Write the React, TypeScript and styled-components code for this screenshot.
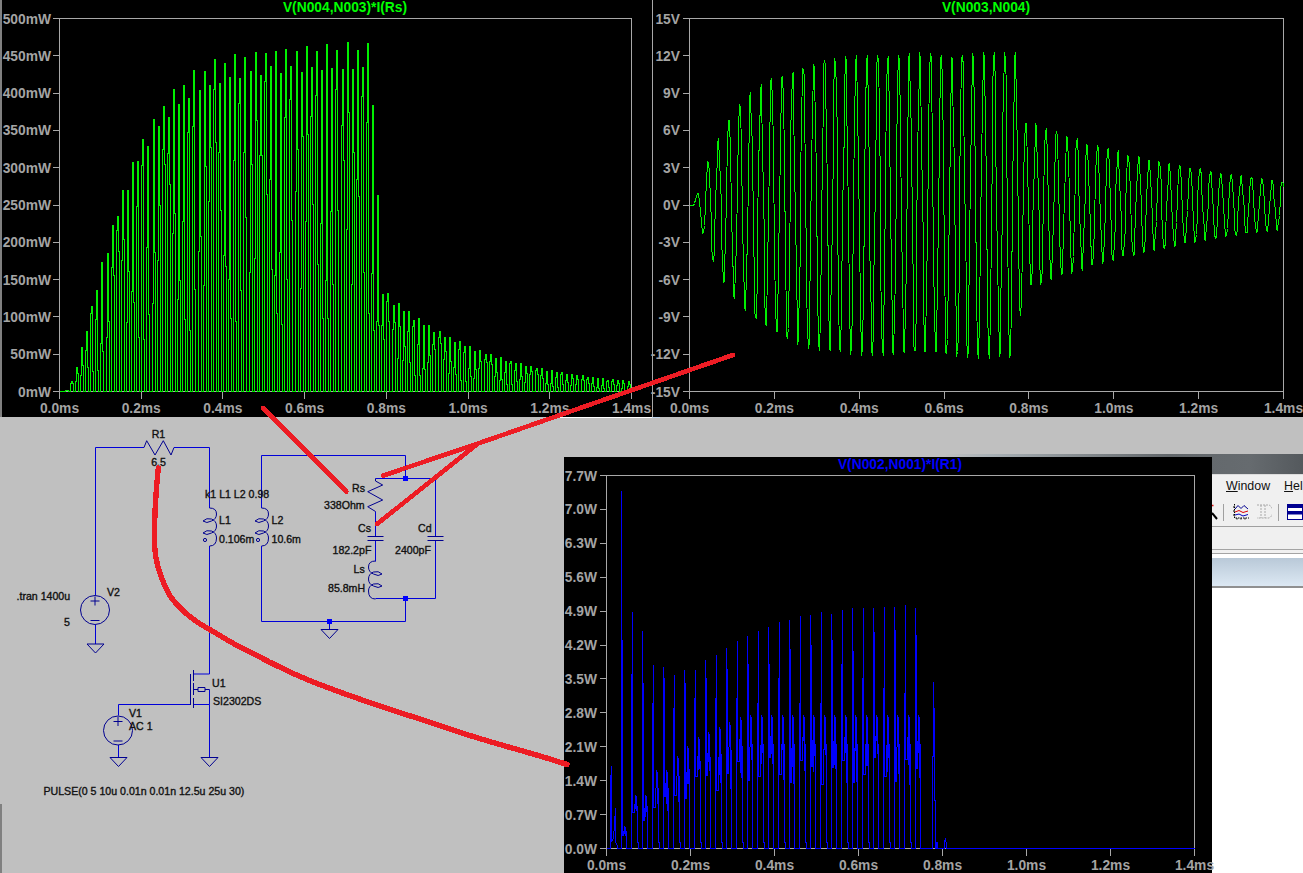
import React from 'react';
import styled, { createGlobalStyle, css } from 'styled-components';

const GlobalStyle = createGlobalStyle`
  html, body { margin: 0; padding: 0; background: #c0c0c0; }
  body { font-family: "Liberation Sans", Arial, sans-serif; overflow: hidden; }
`;

const Desktop = styled.div`
  position: relative;
  width: 1303px;
  height: 873px;
  overflow: hidden;
  background: #c0c0c0;
`;

/* plot windows */
const PlotWindow = styled.div<{ $left: number; $top: number; $w: number; $h: number; $edge?: number; $edgeColor?: string }>`
  position: absolute;
  left: ${p => p.$left}px;
  top: ${p => p.$top}px;
  width: ${p => p.$w}px;
  height: ${p => p.$h}px;
  background: #000;
  ${p => p.$edge && css`
    &::before {
      content: '';
      position: absolute;
      left: 0;
      top: 0;
      bottom: 0;
      width: ${p.$edge}px;
      background: ${p.$edgeColor};
    }
  `}
`;

const PlotTitle = styled.div<{ $color: string; $left: number; $width: number }>`
  height: 16px;
  margin-left: ${p => p.$left}px;
  width: ${p => p.$width}px;
  text-align: center;
  color: ${p => p.$color};
  font-weight: 700;
  font-size: 13.8px;
  line-height: 16px;
  white-space: nowrap;
`;

const ChartSvg = styled.svg`
  display: block;
  overflow: visible;
`;

const AxisLabel = styled.text`
  fill: #a4a4a4;
  font-family: "Liberation Sans", Arial, sans-serif;
  font-weight: 700;
  font-size: 13.8px;
`;

const AxisLine = styled.path`
  stroke: #a8a8a8;
  stroke-width: 1;
  fill: none;
  shape-rendering: crispEdges;
`;

const Trace = styled.polyline<{ $color: string }>`
  fill: none;
  stroke: ${p => p.$color};
  stroke-width: 1;
  stroke-linejoin: miter;
  shape-rendering: crispEdges;
`;

/* schematic */
const Canvas = styled.svg`
  position: absolute;
  left: 0;
  top: 0;
  pointer-events: none;
`;

const Wire = styled.path`
  stroke: #0000d8;
  stroke-width: 1;
  fill: none;
`;

const Part = styled.path`
  stroke: #000090;
  stroke-width: 1;
  fill: none;
`;

const Ring = styled.circle`
  stroke: #000090;
  stroke-width: 1;
  fill: none;
`;

const Junction = styled.rect`
  fill: #0000ff;
`;

const Label = styled.text`
  fill: #111;
  font-family: "Liberation Sans", Arial, sans-serif;
  font-size: 10.6px;
  font-weight: 400;
  stroke: #111;
  stroke-width: 0.35px;
  dominant-baseline: central;
`;

const Scribble = styled.path<{ $w: number }>`
  stroke: #ed1c24;
  stroke-width: ${p => p.$w};
  stroke-linejoin: round;
  stroke-linecap: round;
  fill: none;
  shape-rendering: crispEdges;
`;

const Sliver = styled.div<{ $left: number; $top: number; $w: number; $h: number; $color: string }>`
  position: absolute;
  left: ${p => p.$left}px;
  top: ${p => p.$top}px;
  width: ${p => p.$w}px;
  height: ${p => p.$h}px;
  background: ${p => p.$color};
`;

/* the editor window peeking out behind the third plot */
const AppWindow = styled.div`
  position: absolute;
  left: 946px;
  top: 454px;
  width: 357px;
  height: 419px;
  overflow: hidden;
  background: #fff;
  display: flex;
  flex-direction: column;
`;

const TitleBand = styled.div`
  height: 20px;
  flex: none;
  background: linear-gradient(90deg, #bfbfbf, #a9b1b6 12%, #848a8e 38%, #62676b 62%, #666b6f 85%, #54595d);
  border-bottom: 1px solid #dcdcdc;
`;

const MenuBar = styled.div`
  height: 28px;
  flex: none;
  box-sizing: border-box;
  display: flex;
  align-items: center;
  gap: 14px;
  padding: 0 0 6px 280px;
  background: #f0f0f0;
  font-size: 12.4px;
  color: #111;
  white-space: nowrap;
`;

const ToolBar = styled.div`
  height: 24px;
  flex: none;
  display: flex;
  align-items: flex-start;
  padding: 1px 0 0 266px;
  box-sizing: border-box;
  background: #f0f0f0;
  border-bottom: 1px solid #a0a0a0;
`;

const ToolSep = styled.div<{ $gap: number }>`
  width: 1px;
  height: 17px;
  margin-left: ${p => p.$gap}px;
  background: #a0a0a0;
`;

const ToolIcon = styled.svg<{ $gap: number }>`
  flex: none;
  margin-left: ${p => p.$gap}px;
  display: block;
`;

const ToolRow = styled.div`
  height: 22px;
  flex: none;
  background: #f0f0f0;
  border-bottom: 1px solid #a4a4a4;
`;

const TabStrip = styled.div`
  height: 3px;
  flex: none;
  margin-bottom: 4px;
  background: #f0f0f0;
  border-bottom: 1px solid #a4a4a4;
`;

const Gradient = styled.div`
  height: 28px;
  flex: none;
  background: linear-gradient(180deg, #b9c9d8, #dce8f3);
  border-bottom: 2px solid #909090;
`;

/* waveform data, times in us */
const steps = (end: number) => {
  const out: number[] = [];
  let t = 0;
  let i = 0;
  while (t < end) {
    out.push(t);
    t += 2.3 + 0.8 * Math.sin(i * 1.7);
    i++;
  }
  out.push(end);
  // keep every crest in the list so the envelope stays smooth
  for (let c = 43.2; c < 772; c += 12.5) out.push(c - 1.2, c + 1.2);
  for (let c = 780.3; c < end; c += 12.1) out.push(c - 1.2, c + 1.2);
  return out.sort((a, b) => a - b);
};

const voltsAt = (t: number) => {
  if (t < 10) return 0;
  if (t < 16) return 0.2 * (t - 10) / 6 * 3;
  if (t < 772) return 12.35 * (1 - Math.exp(-(t - 10) / 100)) * Math.cos(2 * Math.PI * (t - 43.2) / 25);
  const after = t < 785 ? 12.3 - (t - 772) * 0.42 : 7 * Math.exp(-(t - 785) / 480);
  return after * Math.cos(2 * Math.PI * (t - 768.2) / 24.2);
};

const powerEnvelope = (t: number) => {
  if (t < 12) return 0;
  if (t < 762) {
    const e = 1 - Math.exp(-(t - 10) / 100);
    return 470 * e * e;
  }
  return t < 790 ? 470 - (t - 762) * 11.8 : 140 * Math.exp(-(t - 790) / 260);
};

type Spec = {
  left: number; right: number; top: number; bottom: number;
  w: number; h: number;
  yLabels: string[];
  xLabels: string[];
  labelRight: number;
  points: string;
  color: string;
};

const MS_LABELS = ['0.0ms', '0.2ms', '0.4ms', '0.6ms', '0.8ms', '1.0ms', '1.2ms', '1.4ms'];

const Chart: React.FC<Spec> = ({ left, right, top, bottom, w, h, yLabels, xLabels, labelRight, points, color }) => {
  const yGap = (bottom - top) / (yLabels.length - 1);
  const xGap = (right - left) / (xLabels.length - 1);
  let ticks = `M${left - 7} ${top}H${right}V${bottom}H${left}V${top}`;
  yLabels.forEach((_, i) => { ticks += `M${left - 7} ${top + i * yGap}H${left}`; });
  xLabels.forEach((_, i) => { ticks += `M${left + i * xGap} ${bottom}V${bottom + 7}`; });
  return (
    <ChartSvg width={w} height={h}>
      <AxisLine d={ticks} />
      <Trace $color={color} points={points} />
      {yLabels.map((l, i) => (
        <AxisLabel key={l} x={labelRight} y={top + i * yGap + 5} textAnchor="end">{l}</AxisLabel>
      ))}
      {xLabels.map((l, i) => (
        <AxisLabel key={l} x={left + i * xGap} y={bottom + 21} textAnchor="middle">{l}</AxisLabel>
      ))}
    </ChartSvg>
  );
};

/* first plot: one spike per half period of the ringing */
const powerPoints = () => {
  const pts: Array<[number, number]> = [[59, 0]];
  for (let k = 1; 4 + 12.5 * k < 1400; k++) {
    const t = 4 + 12.5 * k;
    const p = powerEnvelope(t) * (k % 2 ? 0.94 : 1) * (1 - 0.025 * Math.abs(Math.sin(k * 2.3)));
    const x = Math.round(59 + t / 1400 * 572);
    const mid = 0.62 + 0.3 * Math.sin(k * 1.3);
    const tail = 0.5 + 0.3 * Math.sin(k * 0.7);
    pts.push(
      [x - 1, 0], [x - 1, mid * p], [x, mid * p], [x, p], [x + 1, p], [x + 1, tail * p], [x + 2, tail * p], [x + 2, 0],
    );
  }
  pts.push([631, 0]);
  return pts.map(([x, mw]) => `${x + 0.5},${Math.round(375 - mw / 500 * 372.5) + 0.5}`).join(' ');
};

const voltPoints = steps(1400).map(t => {
  const x = 37 + t / 1400 * 594;
  const y = 188.75 - voltsAt(t) / 15 * 186.25;
  return `${Math.round(x) + 0.5},${Math.round(y) + 0.5}`;
}).join(' ');

/* third plot: the switch current spikes, read off cycle by cycle */
const PEAKS = [7.4, 4.9, 4.5, 3.8, 3.75, 3.6, 3.7, 3.7, 3.9, 4.0, 4.15, 4.3, 4.4, 4.5, 4.58, 4.69, 4.72, 4.81, 4.83, 4.89, 4.86, 4.93, 4.97, 4.97, 4.97, 4.99, 4.99, 5.03, 4.97];
const SHOULDERS = [4.3, 3.6, 3.4, 3.0, 3.5, 2.9, 3.4, 3.1, 3.5, 3.1, 3.7, 3.1, 3.8, 3.0, 3.8, 3.5, 4.1, 3.0, 4.2, 3.0, 4.3, 3.8, 4.07, 3.5, 4.45, 3.3, 4.5, 3.2, 4.4];
const CLUSTER = [0.45, 1.1, 1.1, 1.6, 1.6, 1.9, 2.1, 2.3, 2.4, 2.5, 2.6, 2.7, 2.75];

const switchPoints = () => {
  const pts: Array<[number, number]> = [
    [42.5, 0], [46, 0], [46, 1.34], [47, 1.7], [47, 0.15], [49, 0.2], [50, 0.5], [51, 0.82], [51, 0.15], [53, 0.05], [53, 0],
  ];
  PEAKS.forEach((peak, k) => {
    const x0 = Math.round(57.3 + 10.5 * k);
    const sh = SHOULDERS[k];
    const c = CLUSTER[Math.min(k, CLUSTER.length - 1)];
    const low = c * (0.58 + 0.1 * Math.sin(k * 1.9));
    const dip1 = c * (0.7 + 0.12 * Math.sin(k * 2.7));
    const dip2 = c * (0.6 + 0.12 * Math.sin(k * 1.1));
    if (k % 2 === 0) {
      pts.push([x0, 0], [x0, peak], [x0, sh], [x0 + 1, sh], [x0 + 1, low], [x0 + 2, low]);
    } else {
      pts.push([x0 - 1, 0], [x0 - 1, sh], [x0, sh], [x0, peak], [x0, low], [x0 + 2, low]);
    }
    pts.push([x0 + 3, c], [x0 + 3, dip1], [x0 + 4, c * 0.98], [x0 + 4, dip2], [x0 + 5, c * 0.78]);
    if (k % 2 === 1) {
      pts.push([x0 + 5, 0.13], [x0 + 6, 0.13], [x0 + 6, 0]);
    } else {
      pts.push([x0 + 5, 0]);
    }
  });
  pts.push(
    [368, 0], [368, 1.9], [369, 1.9], [369, 3.45], [369, 2.9], [370, 2.9], [370, 1.0], [371, 1.0], [371, 0], [372, 0], [372, 0.13], [373, 0.13], [373, 0],
    [380, 0], [380, 0.12], [381, 0.2], [382, 0.07], [382, 0], [630, 0],
  );
  return pts.map(([x, w]) => `${x + 0.5},${Math.round(375 - w * 48.44) + 0.5}`).join(' ');
};

/* schematic pieces */
const COIL = 'M0 0Q7 0 7 6Q7 11 2 13Q-3 16 -6.5 13Q-3 9.5 2 11Q7 13 7 18Q7 23 2 25Q-3 28 -6.5 25Q-3 21.5 2 23Q7 25 7 30Q7 38 0 38';

const Inductor: React.FC<{ x: number; y: number; flip?: boolean }> = ({ x, y, flip }) => (
  <Part d={COIL} transform={`translate(${x} ${y}) scale(${flip ? -1 : 1} 1)`} />
);

const Ground: React.FC<{ x: number; y: number }> = ({ x, y }) => (
  <Part d={`M${x - 8.5} ${y}H${x + 8.5}L${x} ${y + 9}Z`} />
);

const Source: React.FC<{ x: number; y: number }> = ({ x, y }) => (
  <>
    <Ring cx={x} cy={y} r={14.5} />
    <Part d={`M${x - 4.5} ${y - 9}H${x + 4.5}M${x} ${y - 13.5}V${y - 4.5}M${x - 4.5} ${y + 10.5}H${x + 4.5}`} />
  </>
);

const Schematic: React.FC = () => (
  <Canvas width={1303} height={873}>
    <Wire d="M95.5 595V447.5H144M174 447.5H209.5V508M209.5 546V674H193.5M193.5 704.5H209.5V757M209.5 689.5V704.5M118.5 715.5V704.5H190.5M118.5 745V757M95.5 625V644" />
    <Part d="M144 447.5L146.7 440.7L155 455L163.3 440.7L171 455L174 447.5" />
    <Part d="M190.5 674V705M193.5 670V681M193.5 683V695M193.5 698V708M193.5 689.5H198M198 687.5H205V691.5H198ZM205 689.5H209.5" />
    <Inductor x={209.5} y={508} />
    <Ring cx={205} cy={540} r={1.6} />
    <Inductor x={261.5} y={508} />
    <Ring cx={258} cy={540} r={1.6} />
    <Source x={95} y={610} />
    <Source x={118} y={730.5} />
    <Ground x={95.5} y={644} />
    <Ground x={118.5} y={757.5} />
    <Ground x={209.5} y={757.5} />

    <Wire d="M261.5 508V455.5H405.5V478.5M261.5 546V621.5H405.5V598.5M375.5 478.5H435.5V536.5M435.5 541V598.5H375.5M375.5 511.5V536.5M375.5 541V561.5M329.5 621.5V629" />
    <Part d="M375.5 478.5V481L382.7 485L367.7 491.7L382.7 500L367.7 506.7L375.5 511.5" />
    <Part d="M367.5 536.5H383.5M367.5 540.5H383.5M427.5 536.5H443.5M427.5 540.5H443.5" />
    <Inductor x={375.5} y={561} flip />
    <Junction x={403} y={476} width={5} height={5} />
    <Junction x={403} y={596} width={5} height={5} />
    <Junction x={327} y={619} width={5} height={5} />
    <Ground x={329.5} y={629.5} />

    <Label x={158.5} y={434} textAnchor="middle">R1</Label>
    <Label x={158.5} y={461.5} textAnchor="middle">6.5</Label>
    <Label x={205} y={493.5}>k1 L1 L2 0.98</Label>
    <Label x={219} y={519.5}>L1</Label>
    <Label x={219} y={538.5}>0.106m</Label>
    <Label x={271.5} y={519.5}>L2</Label>
    <Label x={271.5} y={538.5}>10.6m</Label>
    <Label x={16.5} y={595.5}>.tran 1400u</Label>
    <Label x={107} y={591.5}>V2</Label>
    <Label x={64} y={621.5}>5</Label>
    <Label x={352} y={487.5}>Rs</Label>
    <Label x={324} y={504.5}>338Ohm</Label>
    <Label x={358} y={527.5}>Cs</Label>
    <Label x={418} y={527.5}>Cd</Label>
    <Label x={332.5} y={549.5}>182.2pF</Label>
    <Label x={395} y={549.5}>2400pF</Label>
    <Label x={353.5} y={568.5}>Ls</Label>
    <Label x={328} y={587.5}>85.8mH</Label>
    <Label x={212} y={682.5}>U1</Label>
    <Label x={213} y={700.5}>SI2302DS</Label>
    <Label x={129} y={712.5}>V1</Label>
    <Label x={129} y={725.5}>AC 1</Label>
    <Label x={43.5} y={790.5}>PULSE(0 5 10u 0.01n 0.01n 12.5u 25u 30)</Label>
  </Canvas>
);

const Annotations: React.FC = () => (
  <Canvas width={1303} height={873}>
    <Scribble $w={4.6} d="M263 408L346.5 491.5" />
    <Scribble $w={4.6} d="M383.5 475.5L478 443.5L733 355" />
    <Scribble $w={4.6} d="M377 524L478 443.5" />
    <Scribble $w={5.4} d="M158.3 468C156 490 154.5 515 154.4 537C154.5 552 156 563 160 573C164 585 168 594 173 600C182 611 194 621 207 628C218 634 228 641 240 647C260 657 280 668 300 676.5C350 698 400 712 450 729C490 743 530 752 567 764.5" />
  </Canvas>
);

const App: React.FC = () => (
  <Desktop>
    <GlobalStyle />
    <Sliver $left={0} $top={804} $w={2} $h={69} $color="#808080" />
    <Sliver $left={560} $top={417} $w={92} $h={1} $color="#ffffff" />
    <Sliver $left={652} $top={417} $w={8} $h={1} $color="#c4d8ec" />
    <Schematic />

    <AppWindow>
      <TitleBand />
      <MenuBar>
        <span><u>W</u>indow</span>
        <span><u>H</u>elp</span>
      </MenuBar>
      <ToolBar>
        <ToolIcon $gap={0} width={6} height={18} viewBox="0 0 6 18">
          <path d="M0 1.5L1.5 1.5" stroke="#e01010" strokeWidth="1.5" />
          <path d="M0 9L5 15" stroke="#000" strokeWidth="2" />
        </ToolIcon>
        <ToolSep $gap={5} />
        <ToolIcon $gap={9} width={16} height={16} viewBox="0 0 16 16">
          <path d="M1.5 0V14H16M0 3H1.5M0 7H1.5M0 11H1.5M4 14V16M8 14V16M12 14V16" stroke="#000" strokeDasharray="1.5 1" fill="none" />
          <path d="M2 5L5 1.5L8 4.5L11 1.5L15 5" stroke="#000090" fill="none" />
          <path d="M2 8L6 6.5L10 8.5L15 7" stroke="#e00000" fill="none" />
          <path d="M2 11L6 10L10 12L15 10.5" stroke="#0000c0" fill="none" />
        </ToolIcon>
        <ToolIcon $gap={7} width={16} height={16} viewBox="0 0 16 16">
          <path d="M1 1H13A6 7 0 0 1 13 14H1M5 1V14M9 1V14" stroke="#a8a8a8" strokeDasharray="2 1" fill="none" />
        </ToolIcon>
        <ToolSep $gap={6} />
        <ToolIcon $gap={8} width={16} height={16} viewBox="0 0 16 16">
          <rect x="0.5" y="0.5" width="15" height="15" fill="#fff" stroke="#000090" />
          <rect x="0" y="0" width="16" height="4" fill="#000090" />
          <rect x="0" y="7" width="16" height="3.5" fill="#000090" />
        </ToolIcon>
      </ToolBar>
      <ToolRow />
      <TabStrip />
      <Gradient />
    </AppWindow>

    <PlotWindow $left={0} $top={0} $w={652} $h={417} $edge={2} $edgeColor="#808080">
      <PlotTitle $color="#00ff00" $left={59} $width={572}>V(N004,N003)*I(Rs)</PlotTitle>
      <Chart
        left={59.5} right={631.5} top={2.5} bottom={375.5} w={652} h={401}
        labelRight={51}
        yLabels={['500mW', '450mW', '400mW', '350mW', '300mW', '250mW', '200mW', '150mW', '100mW', '50mW', '0mW']}
        xLabels={MS_LABELS}
        points={powerPoints()}
        color="#00f000"
      />
    </PlotWindow>

    <PlotWindow $left={652} $top={0} $w={651} $h={417} $edge={1} $edgeColor="#a8a8a8">
      <PlotTitle $color="#00ff00" $left={37} $width={594}>V(N003,N004)</PlotTitle>
      <Chart
        left={37.5} right={631.5} top={2.5} bottom={375.5} w={651} h={401}
        labelRight={28}
        yLabels={['15V', '12V', '9V', '6V', '3V', '0V', '-3V', '-6V', '-9V', '-12V', '-15V']}
        xLabels={MS_LABELS}
        points={voltPoints}
        color="#00f000"
      />
    </PlotWindow>

    <PlotWindow $left={564} $top={457} $w={648} $h={416}>
      <PlotTitle $color="#0000ff" $left={42} $width={588}>V(N002,N001)*I(R1)</PlotTitle>
      <Chart
        left={42.5} right={630.5} top={2.5} bottom={375.5} w={648} h={400}
        labelRight={33}
        yLabels={['7.7W', '7.0W', '6.3W', '5.6W', '4.9W', '4.2W', '3.5W', '2.8W', '2.1W', '1.4W', '0.7W', '0.0W']}
        xLabels={MS_LABELS}
        points={switchPoints()}
        color="#0000ff"
      />
    </PlotWindow>

    <Annotations />
  </Desktop>
);

export default App;
